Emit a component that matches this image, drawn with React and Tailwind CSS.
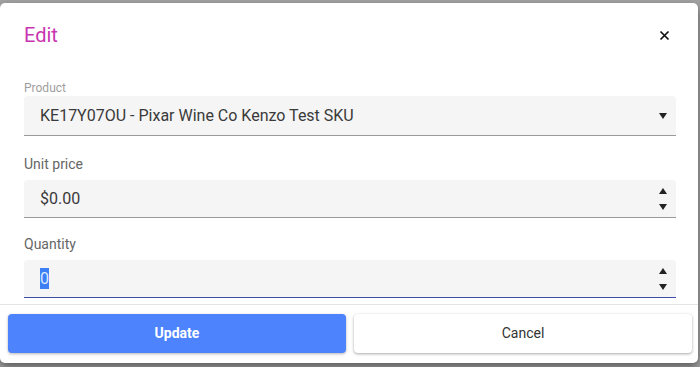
import { useState } from "react";

function Spinner() {
  return (
    <div className="flex flex-col items-center gap-[10px] mr-[9px]">
      <svg width="8" height="6" viewBox="0 0 8 6">
        <path d="M4 0L8 6H0Z" fill="#222" />
      </svg>
      <svg width="8" height="6" viewBox="0 0 8 6">
        <path d="M0 0H8L4 6Z" fill="#222" />
      </svg>
    </div>
  );
}

function Field({ label, children, focused }) {
  return (
    <div className="flex flex-col">
      <div className="text-[14px] leading-[20px] text-[#666] mb-[6px]">{label}</div>
      <div
        className={
          focused
            ? "h-[38px] bg-[#f5f5f5] rounded-t border-b border-[#3f4fa8] flex items-center justify-between pl-4"
            : "h-[38px] bg-[#f5f5f5] rounded-t border-b border-[#9a9a9a] flex items-center justify-between pl-4"
        }
      >
        {children}
        <Spinner />
      </div>
    </div>
  );
}

export default function App() {
  const [qty] = useState("0");

  return (
    <div className="w-[700px] h-[367px] bg-[#a3a3a3] pt-[3px] overflow-hidden" style={{ fontFamily: "Roboto, 'Liberation Sans', sans-serif" }}>
      <div className="w-[698px] h-[360px] bg-white rounded-[5px] shadow-[0_4px_10px_rgba(0,0,0,0.45)] flex flex-col">
        {/* Header */}
        <div className="mt-4 h-8 flex items-center justify-between pl-6 pr-[28px]">
          <div className="text-[20px] text-[#c935b0]">Edit</div>
          <svg width="11" height="11" viewBox="0 0 11 11">
            <path d="M1.5 1.5L9.5 9.5M9.5 1.5L1.5 9.5" stroke="#111" strokeWidth="1.7" />
          </svg>
        </div>

        {/* Form */}
        <div className="pl-6 pr-[22px] flex flex-col">
          <div className="mt-[29px] text-[12px] leading-4 text-[#9e9e9e]">Product</div>
          <div className="h-10 bg-[#f5f5f5] rounded-t border-b border-[#9a9a9a] flex items-center justify-between pl-4 pr-[9px]">
            <span className="text-[16px] text-[#3a3a3a]">KE17Y07OU - Pixar Wine Co Kenzo Test SKU</span>
            <svg width="8" height="6" viewBox="0 0 8 6">
              <path d="M0 0H8L4 6Z" fill="#222" />
            </svg>
          </div>

          <div className="mt-[18px]">
            <Field label="Unit price">
              <span className="text-[16px] text-[#3a3a3a]">$0.00</span>
            </Field>
          </div>

          <div className="mt-4">
            <Field label="Quantity" focused>
              <span className="text-[16px] leading-[21px] bg-[#3d80f6] text-[#dbe8ff]">{qty}</span>
            </Field>
          </div>
        </div>

        {/* Divider */}
        <div className="mt-[6px] border-t border-[#e4e4e4]" />

        {/* Actions */}
        <div className="mt-[9px] pl-2 pr-[6px] flex gap-2">
          <button className="flex-1 h-[39px] rounded bg-[#4d83fd] text-white text-[14px] font-bold shadow-[0_1px_3px_rgba(0,0,0,0.3)]">
            Update
          </button>
          <button className="flex-1 h-[39px] rounded bg-white text-[#333] text-[14px] shadow-[0_1px_3px_rgba(0,0,0,0.35)]">
            Cancel
          </button>
        </div>
      </div>
    </div>
  );
}
